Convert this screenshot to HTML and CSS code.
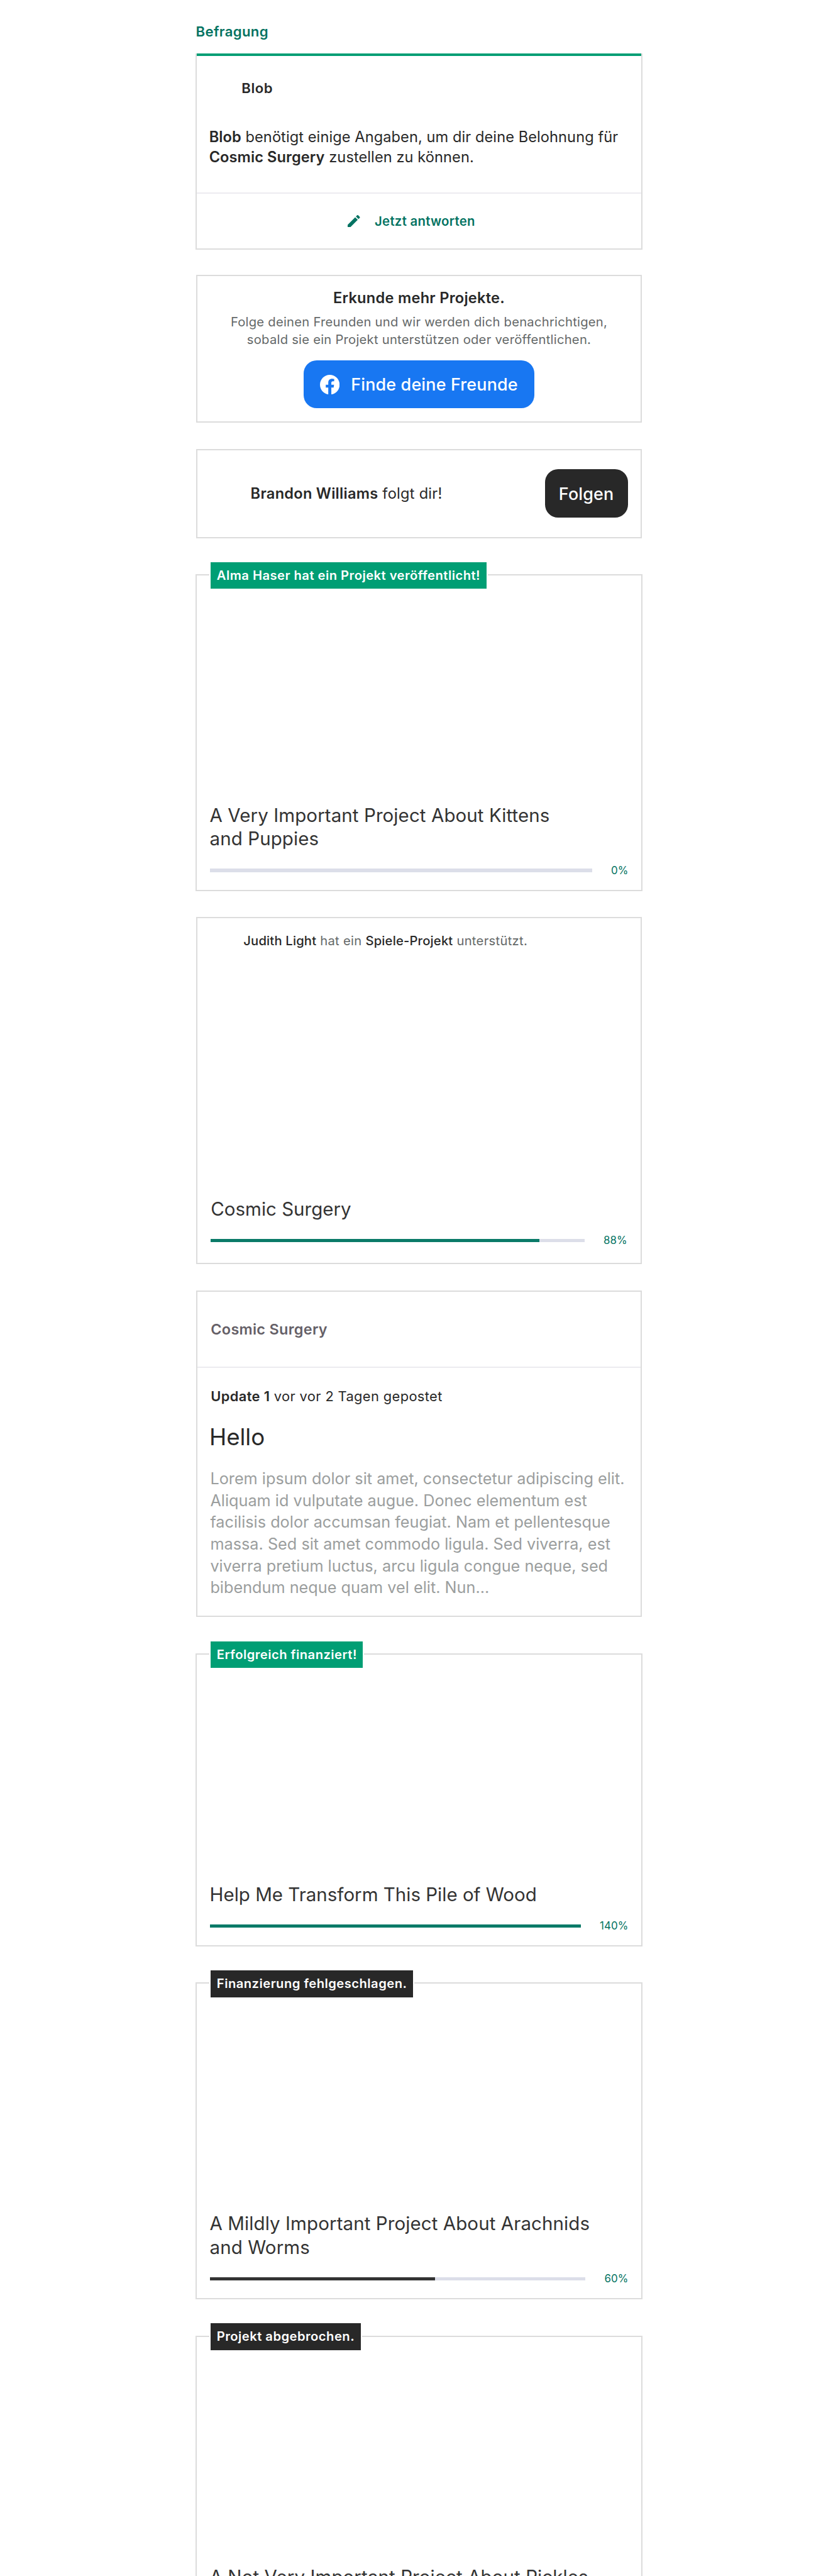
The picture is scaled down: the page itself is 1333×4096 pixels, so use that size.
FILE: index.html
```html
<!DOCTYPE html>
<html lang="de">
<head>
<meta charset="utf-8">
<title>Aktivitäten</title>
<link rel="stylesheet" href="styles.css">
</head>
<body>
<main class="feed">
  <h2 class="feed-heading">Befragung</h2>

  <section class="card card-wide survey">
    <div class="survey-accent"></div>
    <div class="survey-creator">Blob</div>
    <p class="survey-text"><b>Blob</b> benötigt einige Angaben, um dir deine Belohnung für<br><b>Cosmic Surgery</b> zustellen zu können.</p>
    <a class="survey-action">
      <svg class="icon-pencil" viewBox="3 3 18 18"><path d="M3 17.25V21h3.75L17.81 9.94l-3.75-3.75L3 17.25zM20.71 7.04c.39-.39.39-1.02 0-1.41l-2.34-2.34c-.39-.39-1.02-.39-1.41 0l-1.83 1.83 3.75 3.75 1.83-1.83z"/></svg>
      <span>Jetzt antworten</span>
    </a>
  </section>

  <section class="card friends">
    <h3 class="friends-title">Erkunde mehr Projekte.</h3>
    <p class="friends-text">Folge deinen Freunden und wir werden dich benachrichtigen,<br>sobald sie ein Projekt unterstützen oder veröffentlichen.</p>
    <button class="button button-facebook">
      <svg class="icon-facebook" viewBox="0 0 24 24"><path d="M24 12.073c0-6.627-5.373-12-12-12s-12 5.373-12 12c0 5.99 4.388 10.954 10.125 11.854v-8.385H7.078v-3.47h3.047V9.43c0-3.007 1.792-4.669 4.533-4.669 1.312 0 2.686.235 2.686.235v2.953H15.83c-1.491 0-1.956.925-1.956 1.874v2.25h3.328l-.532 3.47h-2.796v8.385C19.612 23.027 24 18.062 24 12.073z"/></svg>
      <span>Finde deine Freunde</span>
    </button>
  </section>

  <section class="card follow">
    <p class="follow-text"><b>Brandon Williams</b> folgt dir!</p>
    <button class="button button-follow">Folgen</button>
  </section>

  <section class="card card-wide project">
    <span class="badge badge-green">Alma Haser hat ein Projekt veröffentlicht!</span>
    <div class="project-media"></div>
    <h3 class="project-title">A Very Important Project About Kittens<br>and Puppies</h3>
    <div class="progress">
      <div class="progress-track"><div class="progress-fill" style="width: 0%"></div></div>
      <span class="progress-label">0%</span>
    </div>
  </section>

  <section class="card backed">
    <p class="backed-text"><b>Judith Light</b> hat ein <b>Spiele-Projekt</b> unterstützt.</p>
    <div class="backed-media"></div>
    <h3 class="project-title project-title-tight">Cosmic Surgery</h3>
    <div class="progress">
      <div class="progress-track"><div class="progress-fill" style="width: 88%"></div></div>
      <span class="progress-label">88%</span>
    </div>
  </section>

  <section class="card update">
    <header class="update-project">Cosmic Surgery</header>
    <p class="update-meta"><b>Update 1</b> vor vor 2 Tagen gepostet</p>
    <h3 class="update-title">Hello</h3>
    <p class="update-body">Lorem ipsum dolor sit amet, consectetur adipiscing elit.<br>Aliquam id vulputate augue. Donec elementum est<br>facilisis dolor accumsan feugiat. Nam et pellentesque<br>massa. Sed sit amet commodo ligula. Sed viverra, est<br>viverra pretium luctus, arcu ligula congue neque, sed<br>bibendum neque quam vel elit. Nun...</p>
  </section>

  <section class="card card-wide project">
    <span class="badge badge-green">Erfolgreich finanziert!</span>
    <div class="project-media"></div>
    <h3 class="project-title project-title-tight">Help Me Transform This Pile of Wood</h3>
    <div class="progress">
      <div class="progress-track"><div class="progress-fill" style="width: 100%"></div></div>
      <span class="progress-label">140%</span>
    </div>
  </section>

  <section class="card card-wide project">
    <span class="badge badge-dark">Finanzierung fehlgeschlagen.</span>
    <div class="project-media"></div>
    <h3 class="project-title">A Mildly Important Project About Arachnids<br>and Worms</h3>
    <div class="progress">
      <div class="progress-track"><div class="progress-fill progress-fill-dark" style="width: 60%"></div></div>
      <span class="progress-label">60%</span>
    </div>
  </section>

  <section class="card card-wide project project-last">
    <span class="badge badge-dark">Projekt abgebrochen.</span>
    <div class="project-media"></div>
    <h3 class="project-title">A Not Very Important Project About Pickles</h3>
  </section>
</main>
</body>
</html>
```
FILE: styles.css
```css
html {
  font-size: 8.678px;
}

*, *::before, *::after {
  box-sizing: border-box;
}

body {
  margin: 0;
  height: 4096px;
  overflow: hidden;
  background: #fff;
  color: #282828;
  font-family: Inter, "Liberation Sans", sans-serif;
}

h2, h3, p {
  margin: 0;
  font-weight: 400;
  white-space: nowrap;
}

b {
  font-weight: 600;
}

.feed {
  display: flex;
  flex-direction: column;
  align-items: center;
}

.feed-heading {
  width: 81.8rem;
  padding: 4.24rem 0 2.56rem;
  color: #037362;
  font-size: 2.55rem;
  font-weight: 600;
  line-height: 3rem;
  letter-spacing: .04rem;
}

.card {
  position: relative;
  width: 81.6rem;
  border: 2px solid #dcdcdc;
}

.card-wide {
  width: 82rem;
}

/* Survey */
.survey {
  border-top: 0;
}

.survey-accent {
  height: .45rem;
  background: #009e74;
}

.survey-creator {
  padding: 4.4rem 0 0 8.25rem;
  font-size: 2.55rem;
  font-weight: 600;
  line-height: 3rem;
  letter-spacing: .06rem;
}

.survey-text {
  padding: 5.6rem 0 4.57rem 2.3rem;
  border-bottom: 2px solid #ecebf0;
  font-size: 2.72rem;
  line-height: 3.73rem;
  letter-spacing: .009rem;
}

.survey-action {
  display: flex;
  align-items: center;
  gap: 2.7rem;
  height: 10rem;
  padding-left: 27.7rem;
  color: #037362;
  font-size: 2.35rem;
  font-weight: 600;
  letter-spacing: .03rem;
}

.icon-pencil {
  width: 2.25rem;
  height: 2.25rem;
  fill: currentColor;
}

/* Buttons */
.button {
  display: flex;
  align-items: center;
  justify-content: center;
  height: 8.8rem;
  padding: 0;
  border: 0;
  border-radius: 2.4rem;
  color: #fff;
  font: 500 3.1rem Inter, "Liberation Sans", sans-serif;
  letter-spacing: .02rem;
}

.button-facebook {
  gap: 2.05rem;
  width: 42.2rem;
  background: #1877f2;
}

.icon-facebook {
  width: 3.6rem;
  height: 3.6rem;
  fill: #fff;
}

.button-follow {
  width: 15.2rem;
  background: #282828;
}

/* Find friends */
.friends {
  display: flex;
  flex-direction: column;
  align-items: center;
  height: 27.1rem;
  margin-top: 4.6rem;
  padding-top: 2.38rem;
}

.friends-title {
  font-size: 2.72rem;
  font-weight: 600;
  line-height: 3.4rem;
  letter-spacing: .03rem;
}

.friends-text {
  margin: 1.04rem 0 2.25rem;
  color: #656969;
  font-size: 2.33rem;
  line-height: 3.2rem;
  letter-spacing: .028rem;
  text-align: center;
}

/* New follower */
.follow {
  display: flex;
  align-items: center;
  justify-content: space-between;
  height: 16.37rem;
  margin-top: 4.8rem;
  padding: 0 2.3rem 0 9.7rem;
}

.follow-text {
  font-size: 2.72rem;
  letter-spacing: .03rem;
}

/* Project cards */
.project {
  margin-top: 6.62rem;
  padding: 0 2.4rem 2.35rem;
}

.project-media {
  height: 41.83rem;
}

.project-title {
  margin-bottom: 2.4rem;
  color: #333;
  font-size: 3.4rem;
  line-height: 4.3rem;
  letter-spacing: .01rem;
}

.project-title-tight {
  letter-spacing: 0;
}

.badge {
  position: absolute;
  top: -2.44rem;
  left: 2.6rem;
  height: 4.87rem;
  padding: 0 1.1rem;
  box-shadow: 0 0 0 2px #fff;
  color: #fff;
  font-size: 2.33rem;
  font-weight: 600;
  line-height: 4.87rem;
  letter-spacing: .053rem;
  white-space: nowrap;
}

.badge-green {
  background: #009e74;
}

.badge-dark {
  background: #282828;
}

.progress {
  display: flex;
  align-items: center;
  gap: 3.5rem;
  height: 2.4rem;
}

.progress-track {
  flex: 1;
  height: .62rem;
  background: #dcdee9;
}

.progress-fill {
  height: 100%;
  background: #0a7a68;
}

.progress-fill-dark {
  background: #333;
}

.progress-label {
  color: #037362;
  font-size: 1.95rem;
  line-height: 2.4rem;
  letter-spacing: .01rem;
}

/* Backed project */
.backed {
  margin-top: 4.8rem;
  padding: 2.6rem 2.4rem 2.9rem;
}

.backed-text {
  padding-left: 6rem;
  color: #656969;
  font-size: 2.33rem;
  line-height: 3rem;
  letter-spacing: .034rem;
}

.backed-text b {
  color: #282828;
  font-weight: 450;
  letter-spacing: .02rem;
}

.backed-media {
  height: 45.5rem;
}

/* Project update */
.update {
  margin-top: 4.8rem;
  padding-bottom: 3.15rem;
}

.update-project {
  display: flex;
  align-items: center;
  height: 14rem;
  padding-left: 2.4rem;
  border-bottom: 2px solid #ecebf0;
  color: #656067;
  font-size: 2.7rem;
  font-weight: 600;
  letter-spacing: .035rem;
}

.update-meta {
  padding: 3.65rem 0 0 2.4rem;
  font-size: 2.52rem;
  line-height: 3.2rem;
  letter-spacing: .042rem;
}

.update-title {
  padding: 3.2rem 0 0 2.15rem;
  font-size: 4.23rem;
  line-height: 5.2rem;
  letter-spacing: -.01rem;
}

.update-body {
  padding: 3.09rem 0 0 2.3rem;
  color: #9b9e9e;
  font-size: 2.91rem;
  line-height: 3.99rem;
}

.project-last {
  height: 60rem;
}
```
